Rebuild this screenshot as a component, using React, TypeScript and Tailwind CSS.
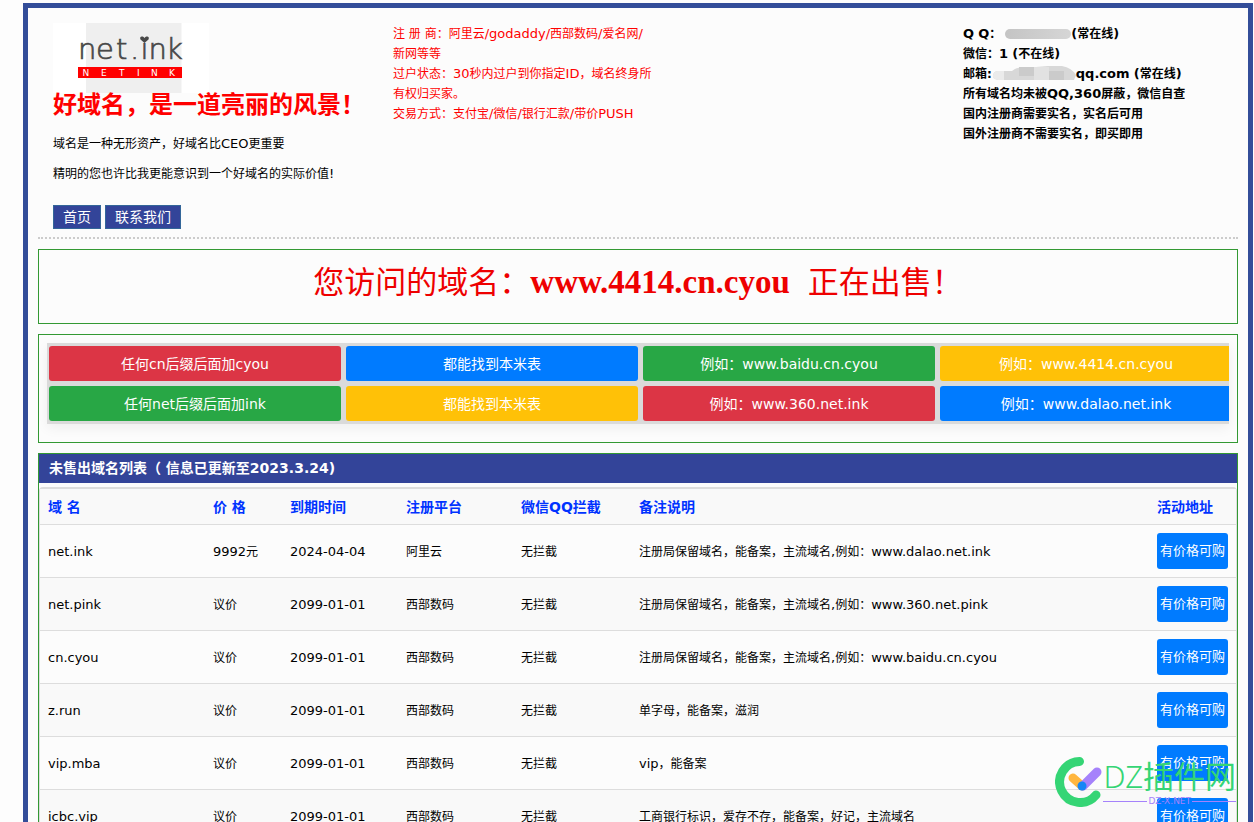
import React from "react";

const LATIN_RUN = /([\x21-\x7e]+)/;

/** Chinese text at 12px whose Latin runs are set one pixel larger. */
function Mixed({ children }: { children: string }) {
  return (
    <>
      {children.split(LATIN_RUN).map((part, i) =>
        i % 2 === 1 ? (
          <span key={i} className="text-[13px]">
            {part}
          </span>
        ) : (
          part
        ),
      )}
    </>
  );
}

const tiles = [
  { label: "任何cn后缀后面加cyou", color: "bg-[#dc3545]" },
  { label: "都能找到本米表", color: "bg-[#007bff]" },
  { label: "例如：www.baidu.cn.cyou", color: "bg-[#28a745]" },
  { label: "例如：www.4414.cn.cyou", color: "bg-[#ffc107]" },
  { label: "任何net后缀后面加ink", color: "bg-[#28a745]" },
  { label: "都能找到本米表", color: "bg-[#ffc107]" },
  { label: "例如：www.360.net.ink", color: "bg-[#dc3545]" },
  { label: "例如：www.dalao.net.ink", color: "bg-[#007bff]" },
];

const columns = [
  { title: "域 名", width: "w-[165px]" },
  { title: "价 格", width: "w-[77px]" },
  { title: "到期时间", width: "w-[116px]" },
  { title: "注册平台", width: "w-[115px]" },
  { title: "微信QQ拦截", width: "w-[118px]" },
  { title: "备注说明", width: "" },
  { title: "活动地址", width: "w-[87px]" },
];

const rows = [
  ["net.ink", "9992元", "2024-04-04", "阿里云", "无拦截", "注册局保留域名，能备案，主流域名,例如：www.dalao.net.ink"],
  ["net.pink", "议价", "2099-01-01", "西部数码", "无拦截", "注册局保留域名，能备案，主流域名,例如：www.360.net.pink"],
  ["cn.cyou", "议价", "2099-01-01", "西部数码", "无拦截", "注册局保留域名，能备案，主流域名,例如：www.baidu.cn.cyou"],
  ["z.run", "议价", "2099-01-01", "西部数码", "无拦截", "单字母，能备案，滋润"],
  ["vip.mba", "议价", "2099-01-01", "西部数码", "无拦截", "vip，能备案"],
  ["icbc.vip", "议价", "2099-01-01", "西部数码", "无拦截", "工商银行标识，爱存不存，能备案，好记，主流域名"],
];

function Logo() {
  return (
    <div className="flex h-[70px] w-[156px] bg-white">
      <svg viewBox="0 0 156 70" className="h-full w-full" role="img" aria-label="net.ink">
        <rect x="33" width="95.500" height="70" fill="#efefef" />
        <text
          x="25 43 63 77 87.500 95.500 113"
          y="36"
          fontSize="29"
          fill="#484848"
          stroke="#484848"
          strokeWidth="0.700"
          fontWeight="200"
          fontFamily="'DejaVu Sans Light','DejaVu Sans',sans-serif"
        >
          net.ink
        </text>
        <rect x="88" y="12" width="7" height="7.500" fill="#efefef" />
        <path d="M91.500 20L87.500 16.500C86 13.500 89.500 12.500 91.500 15C93.500 12.500 97 13.500 95.500 16.500Z" fill="#484848" />
        <rect x="25" y="44" width="104" height="11" fill="#ff0000" />
        <text x="29.500 48 66 84 98 116" y="53" fontSize="9" fill="#ffffff" fontFamily="'DejaVu Sans',sans-serif">
          NETINK
        </text>
      </svg>
    </div>
  );
}

function Header() {
  return (
    <header className="flex items-start border-b-2 border-dotted border-[#cccccc] pt-[5px] pb-2 pl-[15px]">
      <div className="w-[340px] shrink-0">
        <Logo />
        <h1 className="text-2xl leading-6 font-bold whitespace-nowrap text-[#ff0000]">好域名，是一道亮丽的风景！</h1>
        <div className="mt-3 leading-[30px]">
          <p><Mixed>域名是一种无形资产，好域名比CEO更重要</Mixed></p>
          <p><Mixed>精明的您也许比我更能意识到一个好域名的实际价值!</Mixed></p>
        </div>
        <nav className="mt-4 flex gap-1 text-sm text-white">
          <a href="#home" className="border border-[#336699] bg-[#334499] px-[9px] leading-[22px]">首页</a>
          <a href="#contact" className="border border-[#336699] bg-[#334499] px-[9px] leading-[22px]">联系我们</a>
        </nav>
      </div>
      <div className="w-[264px] shrink-0 pt-px leading-5 text-[#ff0000]">
        <p><Mixed>注 册 商：阿里云/godaddy/西部数码/爱名网/</Mixed><br />新网等等</p>
        <p><Mixed>过户状态：30秒内过户到你指定ID，域名终身所有权归买家。</Mixed></p>
        <p><Mixed>交易方式：支付宝/微信/银行汇款/带价PUSH</Mixed></p>
      </div>
      <div className="ml-auto w-[275px] shrink-0 pt-px leading-5 font-bold">
        <p className="flex items-center">
          <span><Mixed>Q Q：</Mixed></span>
          <span className="h-[10px] w-[66px] rounded-full bg-linear-to-r from-[#c4c4c4] to-[#d6d6d6] ml-1" />
          <span><Mixed>(常在线)</Mixed></span>
        </p>
        <p><Mixed>微信：1 (不在线)</Mixed></p>
        <p className="flex items-center">
          <span>邮箱:</span>
          <svg className="h-4 w-[84px] shrink-0" viewBox="0 0 84 16" aria-hidden="true">
            <path d="M6 5H20Q25 1 32 1H44L56 0H70Q80 2 84 9L82 14H6Q0 13 1 9Q2 5 6 5Z" fill="#d8d8d8" />
            <path d="M6 5H12V14H6Q0 13 1 9Q2 5 6 5Z" fill="#ebebeb" />
            <path d="M27 1H42V10H27ZM57 5H72V14H57Z" fill="#cbcbcb" />
            <path d="M42 1H57V14H42Z" fill="#e2e2e2" />
          </svg>
          <span><Mixed>qq.com (常在线)</Mixed></span>
        </p>
        <p><Mixed>所有域名均未被QQ,360屏蔽，微信自查</Mixed></p>
        <p>国内注册商需要实名，实名后可用</p>
        <p>国外注册商不需要实名，即买即用</p>
      </div>
    </header>
  );
}

function DomainTable() {
  return (
    <section className="mt-[10px] border border-[#339933]">
      <h2 className="bg-[#334499] px-[10px] text-sm leading-[29px] font-bold text-white">
        未售出域名列表（ 信息已更新至2023.3.24)
      </h2>
      <table className="mt-1 w-full table-fixed border-separate border-spacing-0 rounded-sm border border-t-2 border-[#dddddd] text-left">
        <thead>
          <tr className="h-9 bg-[#f9f9f9] text-sm text-[#0033ff]">
            {columns.map((c) => (
              <th key={c.title} className={`border-b border-[#dddddd] px-2 font-bold whitespace-nowrap ${c.width}`}>
                {c.title}
              </th>
            ))}
          </tr>
        </thead>
        <tbody>
          {rows.map((row) => (
            <tr key={row[0]} className="h-[53px] even:bg-[#f9f9f9]">
              {row.map((cell, i) => (
                <td key={i} className="border-b border-[#dddddd] px-2 pt-px whitespace-nowrap">
                  <Mixed>{cell}</Mixed>
                </td>
              ))}
              <td className="border-b border-[#dddddd] px-2">
                <button type="button" className="block h-9 w-full rounded-[3px] bg-[#007bff] text-[13px] whitespace-nowrap text-white">
                  有价格可购
                </button>
              </td>
            </tr>
          ))}
        </tbody>
      </table>
    </section>
  );
}

function Watermark() {
  return (
    <div className="pointer-events-none absolute top-[755px] right-[18px] flex">
      <svg viewBox="0 0 48 52" className="h-[52px] w-12" aria-hidden="true">
        <g fill="none" strokeLinecap="round">
          <path d="M24.500 6.500A20.500 20.500 0 1 0 41 40" stroke="#35d575" strokeWidth="9" />
          <path d="M18 23L27 31" stroke="#ffb63e" strokeWidth="9" />
          <path d="M28 31L42 17" stroke="#a582fb" strokeWidth="9" />
        </g>
        <circle cx="27" cy="31" r="4.500" fill="#1686f5" />
      </svg>
      <div>
        <div className="text-[31px] leading-[40px] whitespace-nowrap text-[#35d575]">
          <span className="font-['Noto_Sans',sans-serif] font-light">DZ</span>
          <span className="font-['Noto_Sans_CJK_SC',sans-serif]">插件网</span>
        </div>
        <div className="flex items-center gap-px text-[9px] leading-[8px] text-[#a582fb]">
          <span className="h-px flex-1 bg-[#a582fb]" />
          DZ-X.NET
          <span className="h-px flex-1 bg-[#a582fb]" />
        </div>
      </div>
    </div>
  );
}

export default function App() {
  return (
    <div className="relative overflow-hidden bg-[#fdfdfd] pt-[3px] font-['DejaVu_Sans','Noto_Sans_CJK_SC',sans-serif] text-xs text-black">
      <div className="mr-px ml-[23px] border-[5px] border-[#334d99] bg-[#fcfcfc] p-[10px]">
        <Header />
        <section className="mt-[10px] border border-[#339933] pt-3 pb-5 text-center">
          <p className="text-[31px] leading-[41px] whitespace-nowrap text-[#ee0000]">
            您访问的域名：
            <span className="mr-2 font-['Liberation_Serif',serif] text-[33px] font-bold">www.4414.cn.cyou</span>{" "}
            正在出售！
          </p>
        </section>
        <section className="mt-[10px] border border-[#339933] px-2 pt-2 pb-[18px]">
          <div className="overflow-hidden bg-[#dadada] py-[3px] pl-[2px] shadow-[0_4px_12px_rgba(0,0,0,0.06)]">
            <div className="-mr-[3px] grid grid-cols-4 gap-[5px]">
              {tiles.map((t, i) => (
                <a
                  key={i}
                  href="#list"
                  className={`rounded-[3px] pt-px text-center text-sm leading-[34px] whitespace-nowrap text-white ${t.color}`}
                >
                  {t.label}
                </a>
              ))}
            </div>
          </div>
        </section>
        <DomainTable />
      </div>
      <Watermark />
    </div>
  );
}
